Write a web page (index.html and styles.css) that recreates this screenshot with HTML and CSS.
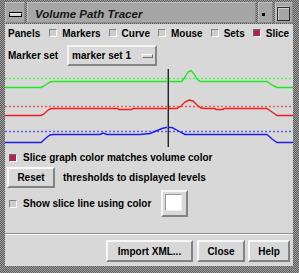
FILE: index.html
```html
<!doctype html>
<html lang="en">
    <head>
        <meta charset="UTF-8" />
        <title>Volume Path Tracer</title>
        <link rel="stylesheet" href="styles.css">
    </head>

    <body>
        <div class="window">
            <div class="titlebar">
                <div class="tb-btn menu-btn"><span class="dash"></span></div>
                <div class="title">Volume Path Tracer</div>
                <div class="tb-btn min-btn"><span class="dot"></span></div>
                <div class="tb-btn max-btn"><span class="square"></span></div>
            </div>

            <div class="content">
                <div class="toggles">
                    <span class="panels-label">Panels</span>
                    <label class="toggle"><span class="check"></span>Markers</label>
                    <label class="toggle"><span class="check"></span>Curve</label>
                    <label class="toggle"><span class="check"></span>Mouse</label>
                    <label class="toggle"><span class="check"></span>Sets</label>
                    <label class="toggle"><span class="check on"></span>Slice</label>
                </div>

                <div class="marker-row">
                    <span>Marker set</span>
                    <div class="option-btn">
                        <span>marker set 1</span>
                        <span class="option-bar"></span>
                    </div>
                </div>

                <svg class="graph" width="288" height="82" viewBox="5 68 288 82">
                    <g fill="none" stroke-width="1.4">
                        <path d="M5 78.5 H293" stroke="#5cf45c" stroke-dasharray="2 2" />
                        <polyline stroke="#1ee81e" points="5,87.5 41,87.5 44,86 47,84 50,82 53,81.5 182,81.5 185,77 188,72 191,70.5 194,74 197,79 200,81.5 267,81.5 272,85 277,87.5 293,87.5" />

                        <path d="M5 106.5 H293" stroke="#f45c5c" stroke-dasharray="2 2" />
                        <polyline stroke="#f01c1c" points="5,115.5 41,115.5 44,114 47,111 50,109 53,108.5 118,108.5 119,109.5 132,109.5 133,108.5 177,108.5 181,106 185,102 189,100 193,101 197,105 201,108 205,108.5 215,108.5 216,109.5 223,109.5 224,108.5 267,108.5 272,112 277,115.5 293,115.5" />

                        <path d="M5 131.5 H293" stroke="#5c5cf4" stroke-dasharray="2 2" />
                        <polyline stroke="#1c1cf0" points="5,142.5 41,142.5 46,138 50,135 53,134.5 100,134.5 103,133 107,134.5 140,134.5 150,133.5 156,131 162,128.5 166,127.5 172,127.5 176,129.5 181,132.5 185,134.5 267,134.5 272,139 277,142.5 293,142.5" />
                    </g>
                    <rect x="167" y="69" width="1" height="78" fill="#8a8a8a" />
                    <rect x="168" y="69" width="1" height="78" fill="#262626" />
                </svg>

                <div class="check-row slice-row">
                    <span class="check on"></span>
                    <span>Slice graph color matches volume color</span>
                </div>

                <div class="reset-row">
                    <button class="btn reset-btn">Reset</button>
                    <span>thresholds to displayed levels</span>
                </div>

                <div class="check-row show-row">
                    <span class="check"></span>
                    <span>Show slice line using color</span>
                    <div class="swatch"><span class="swatch-fill"></span></div>
                </div>

                <div class="separator"></div>

                <div class="actions">
                    <button class="btn import-btn">Import XML...</button>
                    <button class="btn close-btn">Close</button>
                    <button class="btn help-btn">Help</button>
                </div>
            </div>
        </div>
    </body>
</html>
```

FILE: styles.css
```css
* {
    box-sizing: border-box;
    margin: 0;
    padding: 0;
}

body {
    width: 299px;
    height: 273px;
    overflow: hidden;
    font-family: "Liberation Sans", Arial, sans-serif;
    font-size: 10px;
    font-weight: bold;
    color: #000;
}

.window {
    width: 299px;
    height: 273px;
    padding: 2px 6px 7px 5px;
    display: flex;
    flex-direction: column;
    gap: 1px;
    background-color: #7a7a7a;
    background-image: repeating-conic-gradient(#5a5a5a 0% 25%, #a2a2a2 0% 50%);
    background-size: 2px 2px;
}

/* title bar */

.titlebar {
    height: 21px;
    display: flex;
    gap: 2px;
}

.tb-btn,
.title {
    background: #a6a6a6;
    border-top: 1px solid #bdbdbd;
    border-left: 1px solid #bdbdbd;
    border-bottom: 1px solid #8a8a8a;
    border-right: 1px solid #8a8a8a;
}

.tb-btn {
    display: flex;
    justify-content: center;
}

.menu-btn {
    width: 20px;
    padding-top: 10px;
}

.dash {
    width: 13px;
    height: 4px;
    background: #d4d4d4;
    border: 1px solid #000;
    border-top-color: #f0f0f0;
    box-shadow: 0 -1px 0 #000;
}

.title {
    flex: 1;
    padding: 2px 0 0 7px;
    line-height: 18px;
    font-size: 11.5px;
    font-style: italic;
    color: #161616;
}

.min-btn {
    width: 15px;
    padding: 10px 4px 0 0;
}

.dot {
    width: 3px;
    height: 3px;
    background: #000;
}

.max-btn {
    width: 18px;
    padding: 4px 2px 1px 1px;
}

.square {
    width: 13px;
    height: 14px;
    border: 1px solid #2a2a2a;
    box-shadow: inset 1px 1px 0 #cfcfcf, -1px -1px 0 #c4c4c4;
}

/* main panel */

.content {
    flex: 1;
    background: #d8d8d8;
    display: flex;
    flex-direction: column;
}

.toggles {
    height: 18px;
    padding-left: 3px;
    display: flex;
    align-items: center;
    gap: 8px;
}

.panels-label {
    margin-right: 1px;
}

.toggle {
    display: flex;
    align-items: center;
    gap: 5px;
}

.check {
    width: 8px;
    height: 8px;
    flex-shrink: 0;
    background: #cdcdcd;
    border: 1px solid;
    border-color: #858585 #ffffff #ffffff #858585;
}

.check.on {
    background: #b3214f;
    border-color: #6a6a6a #ffffff #ffffff #6a6a6a;
}

.marker-row {
    height: 21px;
    margin-top: 3px;
    padding-left: 3px;
    display: flex;
    align-items: center;
    gap: 9px;
}

.option-btn {
    width: 90px;
    height: 21px;
    padding: 0 2px 0 3px;
    display: flex;
    align-items: center;
    justify-content: space-between;
    background: #d8d8d8;
    border: 2px solid;
    border-color: #f4f4f4 #868686 #868686 #f4f4f4;
}

.option-bar {
    width: 11px;
    height: 4px;
    background: #d8d8d8;
    border: 1px solid;
    border-color: #ffffff #707070 #707070 #ffffff;
}

.graph {
    display: block;
    margin-top: 2px;
}

.check-row {
    padding-left: 4px;
    display: flex;
    align-items: center;
    gap: 6px;
}

.slice-row {
    height: 13px;
    margin-top: 1px;
}

.reset-row {
    height: 21px;
    margin-top: 3px;
    padding-left: 2px;
    display: flex;
    align-items: center;
    gap: 8px;
}

.btn {
    height: 100%;
    font-family: inherit;
    font-size: 10px;
    font-weight: bold;
    color: #000;
    background: #d8d8d8;
    border: 2px solid;
    border-color: #f8f8f8 #828282 #828282 #f8f8f8;
}

.reset-btn {
    width: 48px;
}

.show-row {
    height: 27px;
    margin-top: 2px;
}

.swatch {
    width: 27px;
    height: 27px;
    margin-left: 4px;
    padding: 2px;
    background: #d8d8d8;
    border: 2px solid;
    border-color: #f8f8f8 #828282 #828282 #f8f8f8;
}

.swatch-fill {
    display: block;
    width: 17px;
    height: 17px;
    background: #fff;
    border: 1px solid;
    border-color: #9a9a9a #eeeeee #eeeeee #9a9a9a;
}

.separator {
    margin-top: 16px;
    border-top: 1px solid #8e8e8e;
    border-bottom: 1px solid #fafafa;
}

.actions {
    height: 22px;
    margin-top: 5px;
    padding-right: 3px;
    display: flex;
    justify-content: flex-end;
    gap: 3px;
}

.import-btn {
    width: 87px;
    margin-right: 1px;
}

.close-btn {
    width: 48px;
}

.help-btn {
    width: 42px;
}
```
